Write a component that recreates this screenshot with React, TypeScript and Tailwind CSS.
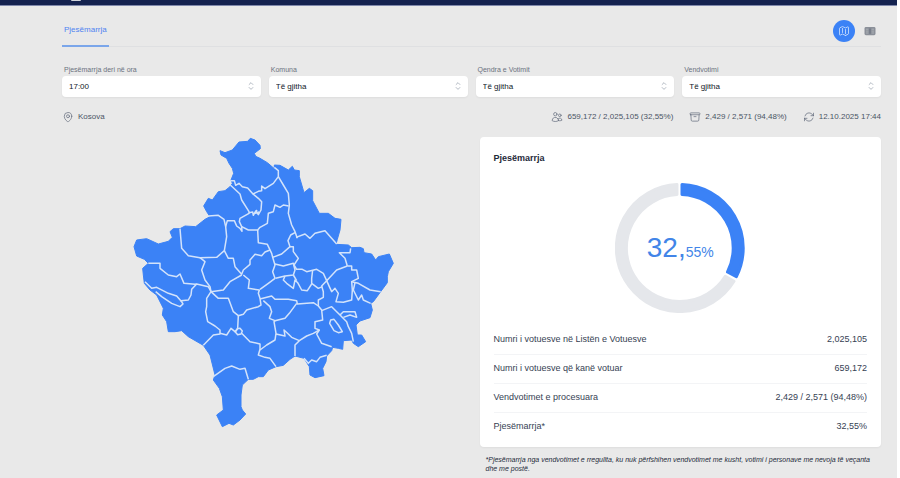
import React, { ReactNode } from "react"
import {
  HiOutlineArchiveBox,
  HiOutlineArrowPath,
  HiOutlineChevronUpDown,
  HiOutlineMap,
  HiOutlineMapPin,
  HiOutlineUsers,
} from "react-icons/hi2"

const filters = [
  { id: "ora", label: "Pjesëmarrja deri në ora", value: "17:00" },
  { id: "komuna", label: "Komuna", value: "Të gjitha" },
  { id: "qendra", label: "Qendra e Votimit", value: "Të gjitha" },
  { id: "vendvotimi", label: "Vendvotimi", value: "Të gjitha" },
]

const stats = [
  { text: "659,172 / 2,025,105 (32,55%)", icon: <HiOutlineUsers size={12} /> },
  { text: "2,429 / 2,571 (94,48%)", icon: <HiOutlineArchiveBox size={12} /> },
  { text: "12.10.2025 17:44", icon: <HiOutlineArrowPath size={12} /> },
]

const rows = [
  { label: "Numri i votuesve në Listën e Votuesve", value: "2,025,105" },
  { label: "Numri i votuesve që kanë votuar", value: "659,172" },
  { label: "Vendvotimet e procesuara", value: "2,429 / 2,571 (94,48%)" },
  { label: "Pjesëmarrja*", value: "32,55%" },
]

const countryOutline = `M285 62 300 68 322 60 342 36 368 34 376 25 390 30 405 46 406 56 388 70 392 79 405 85 427 98
  448 116 448 105 465 106 490 120 502 109 508 120 523 122 523 140 537 188 553 175 563 182 563 212 583 250
  610 250 630 265 648 268 645 300 637 328 633 343 670 345 680 353 705 352 715 356 717 368 740 372 752 390
  760 380 793 372 805 400 790 425 787 440 787 458 767 485 745 515 737 520 742 540 735 563 705 573 693 585
  697 615 710 615 722 635 700 650 685 640 680 630 655 632 653 658 640 655 623 652 620 662 605 678 603 695
  593 715 597 737 570 743 555 735 553 710 537 685 510 678 495 688 475 706 453 710 430 720 415 740 400 740
  385 748 370 748 352 765 348 795 348 830 352 840 362 852 345 870 325 885 312 880 292 890 275 855 295 840
  292 800 283 775 265 750 270 735 255 675 235 646 190 620 170 602 150 605 130 605 125 575 112 555 115 535
  95 495 75 480 58 460 55 435 53 415 70 400 58 388 35 378 27 350 35 330 65 326 100 342 130 334 142 322
  135 305 145 296 165 296 180 288 212 290 240 268 255 260 245 245 236 228 250 205 262 210 280 185 300 182
  315 170 322 160 318 150 326 130 322 115 312 100 305 85 288 75Z`

const municipalityBorders = [
  "M316 152 328 152 332 166 342 160 352 170 368 174 384 192 400 184 410 182 410 168 420 176 445 160 460 140 460 122 448 112",
  "M460 140 475 165 490 190 493 225 490 250 500 285 510 305 517 325",
  "M316 165 345 192 350 210 372 245 372 250 345 265 343 275 350 290 351 304 345 295 335 288 328 272 307 272 302 290",
  "M250 258 280 256 297 268 302 290 305 320 298 362 275 382 225 383 190 377 170 355 167 320 165 296",
  "M384 192 400 205 410 215 408 240 400 254 392 243 385 256 383 246 372 248",
  "M396 240 390 250 402 246",
  "M350 290 370 300 398 300 405 292 427 280 430 250 445 245 450 225 465 232 475 225 491 228",
  "M398 300 400 338 427 343 440 370 443 382 470 372 495 350 489 332 497 315 510 308",
  "M298 362 310 385 325 385 330 410 350 433 355 420 375 403 375 390 390 373 410 377 420 366 435 360",
  "M225 383 240 395 230 420 240 450 255 470 258 485 295 480 315 455 350 435",
  "M70 400 105 400 105 415 130 435 155 440 165 432 177 460 210 463 215 462 250 470 258 485",
  "M215 462 200 478 198 495 190 510 168 512 174 522 165 530 140 520 110 500 92 485",
  "M60 455 80 475 95 472 130 490 155 498 170 515",
  "M258 485 245 505 245 530 242 545 248 575 270 588 285 600 285 612 265 615 235 646",
  "M258 485 280 505 310 505 325 545 340 557 355 553 365 540 400 530 408 525 405 505 400 490 403 480 370 475 373 450 355 435",
  "M340 557 338 595 330 605 318 595 305 615 285 610",
  "M338 596 345 595 352 603 348 612 338 614 331 606Z",
  "M350 610 375 635 405 642 405 658 400 675 420 682 435 685 453 710",
  "M405 660 425 645 450 630 453 610 447 575 450 572",
  "M453 612 480 618 477 600 490 612 500 622 523 632 510 645 510 678",
  "M523 632 545 618 565 610 583 600 570 595 570 575 593 570 590 540 580 528 565 518 517 522 515 512 490 508 450 508 440 498 405 507",
  "M583 600 575 612 590 640 620 650",
  "M515 520 493 550 480 565 450 572 433 565 440 545 435 530 415 512",
  "M590 542 620 530 645 555 665 575 670 590 680 610 685 635",
  "M645 555 655 545 690 545 695 562 675 555 655 562",
  "M580 528 580 510 595 502 595 485 590 468 605 452 613 470 620 485 630 475 640 490 633 515 655 517 680 510 682 480 680 455 700 445 695 420 680 420 680 408 667 408",
  "M667 408 660 385 643 368 675 368 677 355",
  "M667 408 635 420 605 452 595 430 575 418 545 425 532 418 515 418 507 405 520 385 505 365 505 350 495 350",
  "M513 322 540 312 555 325 570 310 600 302 635 342",
  "M563 420 560 445 560 460 580 475 592 470",
  "M443 382 450 405 443 425 450 445 430 460 405 478",
  "M450 402 475 408 505 400 510 420 505 435 480 438 452 445",
  "M480 438 475 450 485 460 505 475 510 450 518 458 530 480 547 482 560 462",
  "M505 435 515 452",
  "M680 455 700 460 735 480 767 485",
  "M690 458 685 480 700 510 710 495 715 510 737 520",
  "M537 685 550 700 560 690 575 695 585 682 605 676",
  "M265 740 300 715 320 708 345 718 360 715 370 748",
  "M617 570 627 568 640 585 652 605 640 608 627 602 614 580Z",
]

type IconButtonProps = {
  label: string;
  className: string;
  children: ReactNode;
}

function IconButton({ label, className, children }: IconButtonProps) {
  return <button
    type="button"
    aria-label={label}
    className={`flex size-[22px] items-center justify-center rounded-full ${className}`}
  >
    {children}
  </button>
}

function TableIcon() {
  return <svg viewBox="0 0 12 12" className="size-3">
    <rect x="0.5" y="2" width="11" height="8.2" rx="1.4" fill="#8b9099" />
    <path d="M2 4.2h2.4M2 6.1h2.4M2 8h2.4M7.6 4.2H10M7.6 6.1H10M7.6 8H10" stroke="#b3b7bd" strokeWidth="0.8" />
    <path d="M6 3.4v5.4" stroke="#6b7280" strokeWidth="1.2" />
  </svg>
}

type FilterProps = {
  id: string;
  label: string;
  value: string;
}

function Filter({ id, label, value }: FilterProps) {
  return <div>
    <label htmlFor={id} className="block pl-0.5 text-[7px] leading-[13px] text-[#6b7280]">{label}</label>
    <div className="relative">
      <select
        id={id}
        defaultValue={value}
        className="block h-[21px] w-full appearance-none rounded-sm bg-white pr-5 pl-[7px] text-[8px] text-gray-900 shadow-xs"
      >
        <option>{value}</option>
      </select>
      <HiOutlineChevronUpDown size={12} className="pointer-events-none absolute top-1 right-1 text-gray-400" />
    </div>
  </div>
}

function KosovoMap() {
  return <svg viewBox="0 21 825 879" className="h-[293px] w-[275px]" role="img" aria-label="Kosova">
    <path d={countryOutline} fill="#3b82f6" stroke="#3b82f6" strokeWidth="3" strokeLinejoin="round" />
    <g fill="none" stroke="#d3e3fb" strokeWidth="4.5" strokeLinejoin="round">
      {municipalityBorders.map((d) => <path key={d} d={d} />)}
    </g>
  </svg>
}

function TurnoutDonut() {
  return <div className="relative mx-auto mt-4 size-[130px]">
    <svg viewBox="-65 -65 130 130" className="size-full" strokeWidth="3" strokeLinejoin="round">
      <path
        d="M2 -63.5A63.5 63.5 0 0 1 56.4 28.6L47.5 24A53.5 53.5 0 0 0 2 -53.5Z"
        fill="#3b82f6"
        stroke="#3b82f6"
      />
      <path
        d="M54 33.2A63.5 63.5 0 1 1 -3 -63.4L-3 -53.4A53.5 53.5 0 1 0 45.3 28.3Z"
        fill="#e5e7eb"
        stroke="#e5e7eb"
      />
    </svg>
    <p className="absolute inset-0 flex items-center justify-center text-[#4285e8]">
      <span>
        <span className="text-[28px]">32,</span>
        <span className="text-[14px]">55%</span>
      </span>
    </p>
  </div>
}

export default function App() {
  return <div className="min-h-screen bg-white pr-[3px] font-['Liberation_Sans',Arial,sans-serif]">
    <div className="min-h-screen bg-[#e9e9e9]">
      <header className="h-1.5 border-b border-[#7f88ab] bg-[#14224f] pl-[71px]">
        <div className="h-px w-2.5 rounded-b-full bg-gray-300" />
      </header>

      <main className="pt-[9px] pr-4 pl-[62px]">
        <nav className="flex items-center justify-between border-b border-[#dfe0e2]">
          <button type="button" className="-mb-px h-8 border-b-2 border-[#7ba6ea] px-0.5 text-[8px] text-[#4f83f1]">
            Pjesëmarrja
          </button>
          <div className="flex items-center gap-1">
            <IconButton label="Harta" className="bg-[#3b82f6] text-blue-100">
              <HiOutlineMap size={12} />
            </IconButton>
            <IconButton label="Tabela" className="text-gray-500">
              <TableIcon />
            </IconButton>
          </div>
        </nav>

        <div className="mt-4 grid grid-cols-4 gap-2">
          {filters.map((filter) => <Filter key={filter.id} {...filter} />)}
        </div>

        <div className="mt-3 flex items-center justify-between text-[8px] leading-4 text-gray-600">
          <span className="flex items-center gap-1">
            <HiOutlineMapPin size={12} className="text-gray-500" /> Kosova
          </span>
          <ul className="flex gap-4">
            {stats.map(({ text, icon }) => <li key={text} className="flex items-center gap-1">
              <span className="text-gray-500">{icon}</span>
              {text}
            </li>)}
          </ul>
        </div>

        <div className="mt-3 grid grid-cols-2 gap-4">
          <div className="flex items-start justify-center">
            <KosovoMap />
          </div>

          <section>
            <div className="rounded bg-white px-3.5 pt-3 pb-1.5 shadow-xs">
              <h2 className="text-[9px] leading-[18px] font-bold text-gray-800">Pjesëmarrja</h2>
              <TurnoutDonut />
              <table className="mt-3 w-full text-[9px] text-gray-700">
                <tbody>
                  {rows.map(({ label, value }) => <tr key={label} className="h-[29px] border-b border-gray-100 last:border-b-0">
                    <th scope="row" className="text-left font-normal">{label}</th>
                    <td className="text-right">{value}</td>
                  </tr>)}
                </tbody>
              </table>
            </div>
            <p className="mt-2 px-1.5 text-[7px] leading-[9px] text-gray-800 italic">
              *Pjesëmarrja nga vendvotimet e rregullta, ku nuk përfshihen vendvotimet me kusht, votimi i personave me nevoja të veçanta dhe me postë.
            </p>
          </section>
        </div>
      </main>
    </div>
  </div>
}
